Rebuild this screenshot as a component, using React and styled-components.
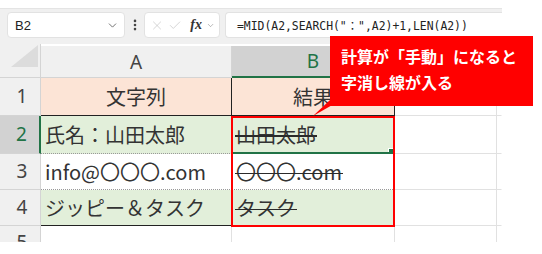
import React from "react";
import styled, { createGlobalStyle } from "styled-components";
import { ChevronDown, EllipsisVertical, X, Check } from "lucide-react";

const GlobalStyle = createGlobalStyle`
  html, body {
    margin: 0;
    padding: 0;
    background: #fff;
  }
`;

const Page = styled.div`
  width: 542px;
  height: 254px;
  overflow: hidden;
  position: relative;
  background: #fff;
  padding-top: 8px;
  box-sizing: border-box;
`;

const Toolbar = styled.div`
  width: 502px;
  height: 36px;
  background: #f0f0f0;
  border-top: 1px solid #e4e4e4;
  box-sizing: border-box;
  display: flex;
  align-items: flex-start;
  padding: 3px 0 0 7px;
`;

const Box = styled.div`
  height: 26px;
  box-sizing: border-box;
  background: #fff;
  border: 1px solid #e2e2e2;
  border-radius: 4px;
  display: flex;
  align-items: center;
`;

const NameBox = styled(Box)`
  width: 118px;
  padding: 0 5px 0 7px;
  justify-content: space-between;
  font-family: "Liberation Sans", Arial, sans-serif;
  font-size: 13px;
  color: #222;
`;

const Dots = styled.div`
  width: 19px;
  height: 26px;
  display: flex;
  align-items: center;
  justify-content: center;
  color: #444;
`;

const FxBox = styled(Box)`
  width: 76px;
  padding: 0 4px 0 5px;
  gap: 4px;
  color: #b8b8b8;
`;

const Fx = styled.span`
  font-family: "Liberation Serif", serif;
  font-style: italic;
  font-weight: bold;
  font-size: 14px;
  color: #333;
  margin-left: 4px;
`;

const FormulaBox = styled(Box)`
  flex: 1;
  margin-left: 5px;
  border-right: none;
  border-radius: 4px 0 0 4px;
  padding-left: 11px;
  font-family: "DejaVu Sans Mono", "Noto Sans CJK JP", monospace;
  font-size: 11.4px;
  color: #222;
  white-space: pre;
`;

const Sheet = styled.div`
  width: 502px;
  height: 198px;
  overflow: hidden;
  display: grid;
  grid-template-columns: 41px 191px 163px 102px 5px;
  grid-template-rows: 34px 38px 38px 36px 36px 36px;
  background: #fff;
  position: relative;
`;

const Corner = styled.div`
  background: #f0f0f0;
  border-right: 1px solid #d4d4d4;
  border-bottom: 1px solid #d4d4d4;
  position: relative;
  &::after {
    content: "";
    position: absolute;
    right: 2px;
    bottom: 10px;
    width: 0;
    height: 0;
    border-left: 27px solid transparent;
    border-bottom: 22px solid #dcdcdc;
  }
`;

const ColHead = styled.div`
  background: ${(p) => (p.$active ? "#d2d2d2" : "#f0f0f0")};
  color: ${(p) => (p.$active ? "#217346" : "#444")};
  border-right: 1px solid #d4d4d4;
  border-bottom: ${(p) => (p.$active ? "2px solid #217346" : "1px solid #d4d4d4")};
  margin-top: 2px;
  display: flex;
  align-items: center;
  justify-content: center;
  font-family: "Noto Sans", "Liberation Sans", sans-serif;
  font-size: 19px;
`;

const RowHead = styled.div`
  background: ${(p) => (p.$active ? "#d2d2d2" : "#f0f0f0")};
  color: ${(p) => (p.$active ? "#217346" : "#444")};
  border-right: ${(p) => (p.$active ? "2px solid #217346" : "1px solid #d4d4d4")};
  border-bottom: 1px solid #d4d4d4;
  display: flex;
  align-items: ${(p) => (p.$top ? "flex-start" : "center")};
  padding-top: ${(p) => (p.$top ? "7px" : "0")};
  justify-content: center;
  font-family: "Noto Sans", "Liberation Sans", sans-serif;
  font-size: 19px;
  line-height: 1;
  padding-left: 4px;
`;

const Cell = styled.div`
  box-sizing: border-box;
  background: ${(p) => p.$bg || "#fff"};
  border-right: 1px solid ${(p) => p.$right || "#e1e1e1"};
  border-bottom: ${(p) => p.$bottom || "1px solid #e1e1e1"};
  display: flex;
  align-items: center;
  justify-content: ${(p) => (p.$center ? "center" : "flex-start")};
  padding-left: ${(p) => (p.$center ? "0" : "4px")};
  font-family: "Noto Sans CJK JP", "Noto Sans", sans-serif;
  font-size: 20px;
  color: #333;
  white-space: nowrap;
  overflow: hidden;
  position: relative;
`;

const Strike = styled.span`
  position: relative;
  display: inline-block;
  &::after {
    content: "";
    position: absolute;
    left: -1px;
    right: -1px;
    top: calc(50% + 1px);
    height: 1.6px;
    background: #2a2a2a;
  }
`;

const Handle = styled.span`
  position: absolute;
  right: -1px;
  bottom: -3px;
  width: 5px;
  height: 5px;
  background: #217346;
  border: 1px solid #fff;
  z-index: 3;
`;

const Frame = styled.div`
  position: absolute;
  left: 231px;
  top: 72px;
  width: 164px;
  height: 111px;
  border: 2.5px solid #ff0000;
  box-sizing: border-box;
  pointer-events: none;
  z-index: 4;
`;

const Callout = styled.div`
  position: absolute;
  left: 330px;
  top: 36px;
  width: 203px;
  height: 70px;
  background: #ff0000;
  color: #fff;
  box-sizing: border-box;
  padding: 7px 0 0 11px;
  font-family: "Noto Sans CJK JP", sans-serif;
  font-weight: bold;
  font-size: 16px;
  line-height: 26px;
  z-index: 5;
`;

const Pointer = styled.svg`
  position: absolute;
  left: 310px;
  top: 100px;
  z-index: 5;
`;

const rows = [
  { n: 1, a: "文字列", b: "結果", bg: "#fce4d6", center: true, bottom: "1px solid #222" },
  { n: 2, a: "氏名：山田太郎", b: "山田太郎", bg: "#e2efda", bottom: "1px dotted #999", active: true },
  { n: 3, a: "info@〇〇〇.com", b: "〇〇〇.com", bg: "#fff", bottom: "1px dotted #999" },
  { n: 4, a: "ジッピー＆タスク", b: "タスク", bg: "#e2efda", bottom: "1px solid #222" },
];

export default function App() {
  return (
    <Page>
      <GlobalStyle />
      <Toolbar>
        <NameBox>
          <span>B2</span>
          <ChevronDown size={13} strokeWidth={1.5} color="#555" />
        </NameBox>
        <Dots>
          <EllipsisVertical size={14} strokeWidth={2.5} />
        </Dots>
        <FxBox>
          <X size={17} strokeWidth={1} />
          <Check size={17} strokeWidth={1} />
          <Fx>fx</Fx>
          <ChevronDown size={11} strokeWidth={1.2} color="#666" />
        </FxBox>
        <FormulaBox>=MID(A2,SEARCH("：",A2)+1,LEN(A2))</FormulaBox>
      </Toolbar>
      <Sheet>
        <Corner />
        <ColHead>A</ColHead>
        <ColHead $active>B</ColHead>
        <ColHead />
        <ColHead />

        {rows.map((r) => (
          <React.Fragment key={r.n}>
            <RowHead $active={r.active}>{r.n}</RowHead>
            <Cell $bg={r.bg} $center={r.center} $bottom={r.bottom} $right="#222">
              {r.a}
            </Cell>
            <Cell
              $bg={r.bg}
              $center={r.center}
              $bottom={r.active ? "2px solid #217346" : r.bottom}
              $right="#222"
            >
              {r.center ? r.b : <Strike>{r.b}</Strike>}
              {r.active && <Handle />}
            </Cell>
            <Cell />
            <Cell $right="transparent" />
          </React.Fragment>
        ))}

        <RowHead $top>5</RowHead>
        <Cell />
        <Cell />
        <Cell />
        <Cell $right="transparent" />

        <Frame />
      </Sheet>
      <Pointer width="24" height="18" viewBox="0 0 24 18">
        <polygon points="20,0 24,4 3,16" fill="#ff0000" />
      </Pointer>
      <Callout>
        計算が「手動」になると
        <br />
        字消し線が入る
      </Callout>
    </Page>
  );
}
